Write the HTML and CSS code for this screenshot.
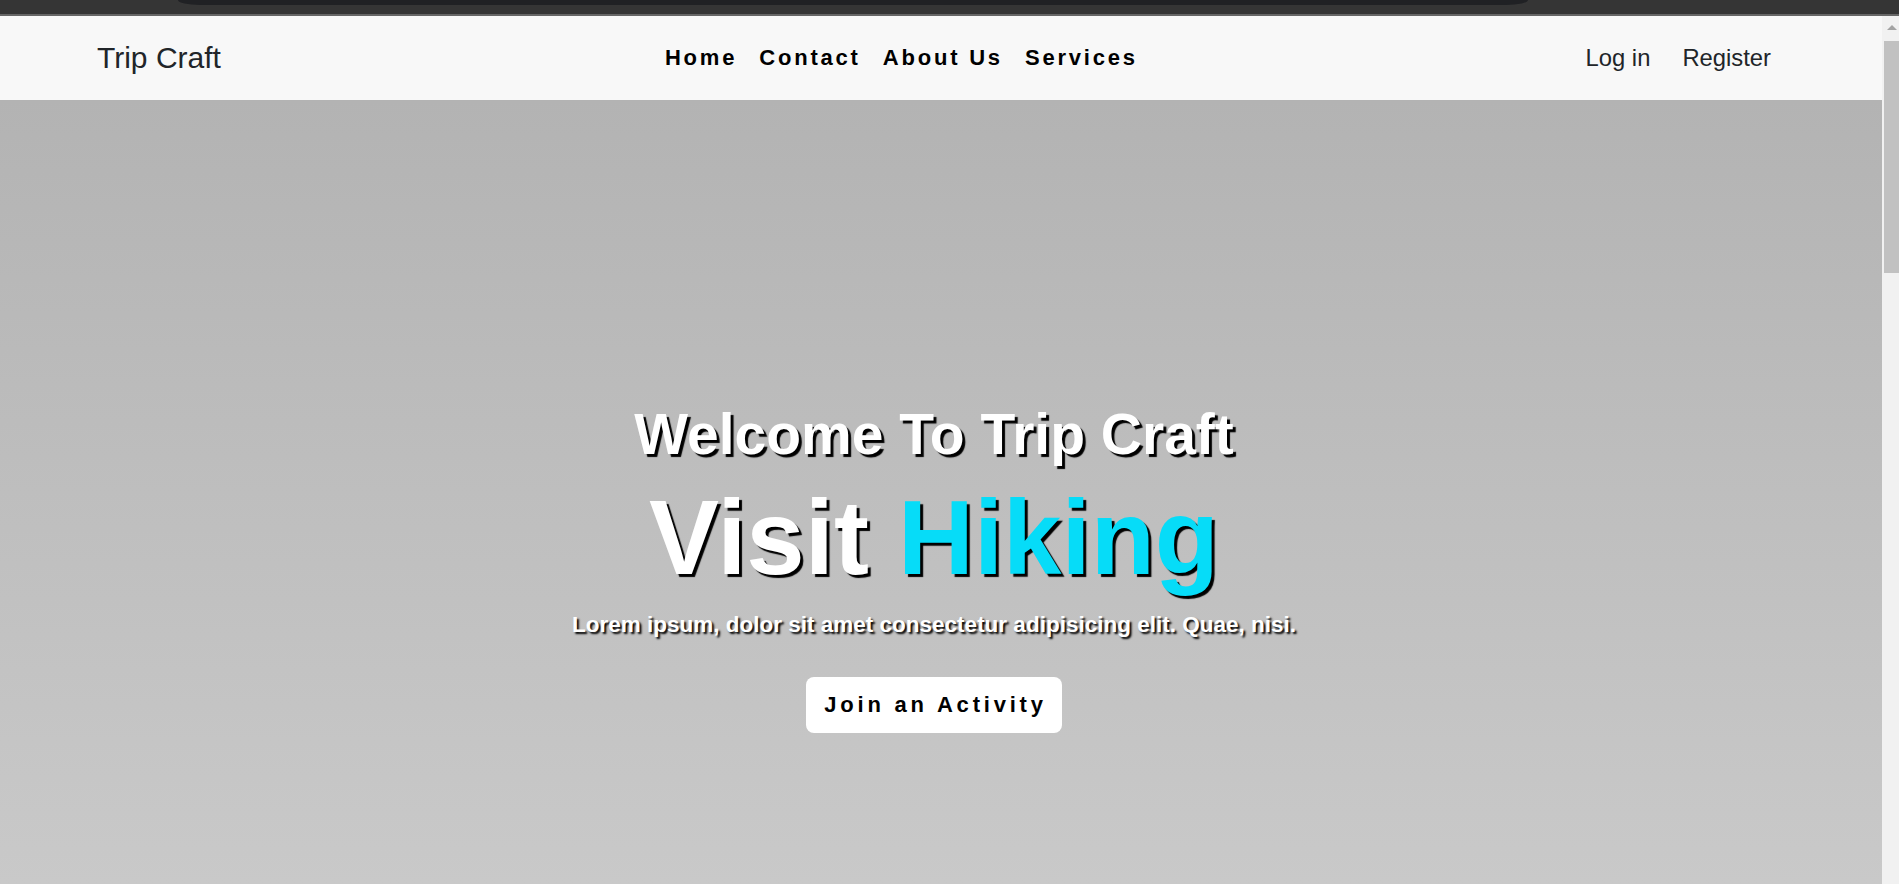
FILE: index.html
```html
<!DOCTYPE html>
<html lang="en">
<head>
<meta charset="utf-8">
<title>Trip Craft</title>
<link rel="stylesheet" href="styles.css">
</head>
<body>
  <div class="chrome"><div class="chrome-tab"></div></div>
  <div class="window">
    <div class="page">
      <header class="nav">
        <a class="brand" href="#">Trip Craft</a>
        <nav class="links">
          <a href="#">Home</a>
          <a href="#">Contact</a>
          <a href="#">About Us</a>
          <a href="#">Services</a>
        </nav>
        <div class="auth">
          <a href="#">Log in</a>
          <a href="#">Register</a>
        </div>
      </header>
      <section class="hero">
        <h2 class="welcome">Welcome To Trip Craft</h2>
        <h1 class="visit">Visit <span class="accent">Hiking</span></h1>
        <p class="lorem">Lorem ipsum, dolor sit amet consectetur adipisicing elit. Quae, nisi.</p>
        <a class="cta" href="#">Join an Activity</a>
      </section>
    </div>
    <div class="scrollbar">
      <div class="scroll-arrow"></div>
      <div class="scroll-thumb"></div>
    </div>
  </div>
</body>
</html>
```
FILE: styles.css
```css
html, body {
  margin: 0;
  padding: 0;
  height: 884px;
  overflow: hidden;
  font-family: "Liberation Sans", Arial, sans-serif;
}

a { text-decoration: none; }

.chrome {
  height: 14px;
  background: #353535;
  border-bottom: 2px solid #666666;
}

.chrome-tab {
  margin-left: 178px;
  width: 1350px;
  height: 5px;
  background: #202124;
  border-radius: 0 0 22px 22px / 0 0 5px 5px;
}

.window {
  display: flex;
  height: 868px;
}

.page {
  flex: 1;
  display: flex;
  flex-direction: column;
  overflow: hidden;
}

.nav {
  height: 84px;
  flex: none;
  background: #f8f8f8;
  display: flex;
  align-items: center;
  padding: 0 111px 0 97px;
}

.brand {
  font-size: 30px;
  color: #212529;
}

.links {
  display: flex;
  gap: 22px;
  margin-left: 444px;
}

.links a {
  font-size: 22px;
  font-weight: 700;
  letter-spacing: 2.8px;
  color: #000;
}

.auth {
  margin-left: auto;
  display: flex;
  gap: 32px;
}

.auth a {
  font-size: 23.8px;
  color: #212529;
}

.hero {
  flex: 1;
  background: linear-gradient(#b3b3b3, #c9c9c9);
  display: flex;
  flex-direction: column;
  align-items: center;
  padding: 302px 14px 0 0;
  color: #fff;
  text-align: center;
}

.welcome {
  margin: 0;
  font-size: 57px;
  line-height: 64px;
  font-weight: 700;
  text-shadow: 3px 3px 1px #000;
}

.visit {
  margin: 19px 0 0;
  font-size: 105px;
  line-height: 106px;
  font-weight: 700;
  text-shadow: 3px 3px 1px #000;
}

.accent {
  color: #06dcf8;
}

.lorem {
  margin: 21px 0 0;
  font-size: 22.5px;
  line-height: 26px;
  font-weight: 700;
  text-shadow: 2px 2px 2px #000;
}

.cta {
  margin-top: 39px;
  background: #fff;
  color: #000;
  border-radius: 8px;
  padding: 15px 15px 15px 18px;
  font-size: 22px;
  line-height: 26px;
  font-weight: 700;
  letter-spacing: 3.8px;
}

.scrollbar {
  width: 17px;
  flex: none;
  background: #f1f1f1;
  display: flex;
  flex-direction: column;
  align-items: flex-end;
}

.scroll-arrow {
  margin: 9px 2px 0 0;
  width: 0;
  height: 0;
  border-left: 5px solid transparent;
  border-right: 5px solid transparent;
  border-bottom: 5px solid #a3a3a3;
}

.scroll-thumb {
  margin-top: 11px;
  width: 15px;
  height: 232px;
  background: #c1c1c1;
}
```
